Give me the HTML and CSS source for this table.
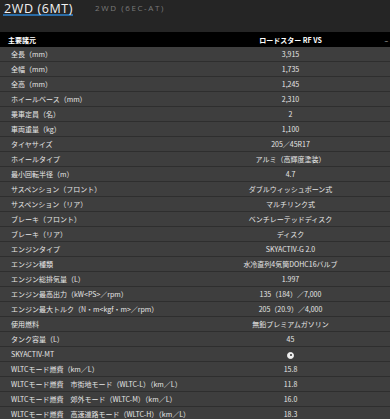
FILE: index.html
```html
<!DOCTYPE html>
<html lang="ja">
<head>
<meta charset="utf-8">
<link rel="stylesheet" href="styles.css">
</head>
<body>
<div class="tabs">
  <div class="tab active">2WD (6MT)</div>
  <div class="tab">2WD (6EC-AT)</div>
</div>
<table class="spec">
  <thead>
    <tr><th class="lbl">主要諸元</th><th class="val">ロードスター RF VS</th><th class="dash">–</th></tr>
  </thead>
  <tbody>
    <tr><td class="lbl">全長（mm）</td><td class="val">3,915</td><td></td></tr>
    <tr><td class="lbl">全幅（mm）</td><td class="val">1,735</td><td></td></tr>
    <tr><td class="lbl">全高（mm）</td><td class="val">1,245</td><td></td></tr>
    <tr><td class="lbl">ホイールベース（mm）</td><td class="val">2,310</td><td></td></tr>
    <tr><td class="lbl">乗車定員（名）</td><td class="val">2</td><td></td></tr>
    <tr><td class="lbl">車両重量（kg）</td><td class="val">1,100</td><td></td></tr>
    <tr><td class="lbl">タイヤサイズ</td><td class="val">205／45R17</td><td></td></tr>
    <tr><td class="lbl">ホイールタイプ</td><td class="val">アルミ（高輝度塗装）</td><td></td></tr>
    <tr><td class="lbl">最小回転半径（m）</td><td class="val">4.7</td><td></td></tr>
    <tr><td class="lbl">サスペンション（フロント）</td><td class="val">ダブルウィッシュボーン式</td><td></td></tr>
    <tr><td class="lbl">サスペンション（リア）</td><td class="val">マルチリンク式</td><td></td></tr>
    <tr><td class="lbl">ブレーキ（フロント）</td><td class="val">ベンチレーテッドディスク</td><td></td></tr>
    <tr><td class="lbl">ブレーキ（リア）</td><td class="val">ディスク</td><td></td></tr>
    <tr><td class="lbl">エンジンタイプ</td><td class="val">SKYACTIV-G 2.0</td><td></td></tr>
    <tr><td class="lbl">エンジン種類</td><td class="val">水冷直列4気筒DOHC16バルブ</td><td></td></tr>
    <tr><td class="lbl">エンジン総排気量（L）</td><td class="val">1.997</td><td></td></tr>
    <tr><td class="lbl">エンジン最高出力（kW&lt;PS&gt;／rpm）</td><td class="val">135（184）／7,000</td><td></td></tr>
    <tr><td class="lbl">エンジン最大トルク（N・m&lt;kgf・m&gt;／rpm）</td><td class="val">205（20.9）／4,000</td><td></td></tr>
    <tr><td class="lbl">使用燃料</td><td class="val">無鉛プレミアムガソリン</td><td></td></tr>
    <tr><td class="lbl">タンク容量（L）</td><td class="val">45</td><td></td></tr>
    <tr><td class="lbl">SKYACTIV-MT</td><td class="val"><span class="dot"></span></td><td></td></tr>
    <tr><td class="lbl">WLTCモード燃費（km／L）</td><td class="val">15.8</td><td></td></tr>
    <tr><td class="lbl">WLTCモード燃費　市街地モード（WLTC-L）（km／L）</td><td class="val">11.8</td><td></td></tr>
    <tr><td class="lbl">WLTCモード燃費　郊外モード（WLTC-M）（km／L）</td><td class="val">16.0</td><td></td></tr>
    <tr><td class="lbl">WLTCモード燃費　高速道路モード（WLTC-H）（km／L）</td><td class="val">18.3</td><td></td></tr>
  </tbody>
</table>
</body>
</html>
```
FILE: styles.css
```css
html, body {
  margin: 0;
  padding: 0;
  background: #252525;
  font-family: "Noto Sans CJK JP", "Noto Sans", sans-serif;
  color: #e6e6e6;
  overflow: hidden;
}
.tabs {
  display: flex;
  align-items: flex-start;
  height: 32px;
  padding-left: 3px;
  gap: 22px;
}
.tab {
  font-family: "Open Sans", "Noto Sans", sans-serif;
  font-size: 8px;
  letter-spacing: 1.6px;
  color: #7a7a7a;
  padding-top: 2px;
  line-height: 12px;
}
.tab.active {
  font-size: 12.5px;
  letter-spacing: 0.6px;
  font-weight: 500;
  color: #f2f2f2;
  line-height: 11.5px;
  padding: 2.5px 0 0 1px;
  border-bottom: 2px solid #2b6ca6;
}
.spec {
  width: 387px;
  border-collapse: collapse;
  table-layout: fixed;
  font-size: 7px;
}
.spec th, .spec td {
  height: 14px;
  padding: 0;
  line-height: 14px;
  white-space: nowrap;
  overflow: visible;
}
.spec thead tr {
  background: #000;
}
.spec thead th {
  height: 15px;
  font-weight: 700;
  color: #fff;
}
.spec tbody tr {
  background: #3e3e3e;
  border-bottom: 1px solid #2e2e2e;
}
.spec .lbl {
  width: 195px;
  text-align: left;
  padding-left: 11px;
}
.spec thead .lbl {
  padding-left: 8px;
}
.spec .val {
  width: 175px;
  text-align: center;
  padding-left: 0;
}
.spec .dash {
  width: 17px;
  text-align: center;
  font-weight: 400;
  color: #ccc;
}
.dot {
  display: inline-block;
  width: 5px;
  height: 5px;
  border-radius: 50%;
  border: 1.5px solid #f0f0f0;
  background: #f0f0f0;
  position: relative;
  vertical-align: middle;
}
.dot::after {
  content: "";
  position: absolute;
  left: 1.5px;
  top: 1.5px;
  width: 2px;
  height: 2px;
  border-radius: 50%;
  background: #333;
}
```
